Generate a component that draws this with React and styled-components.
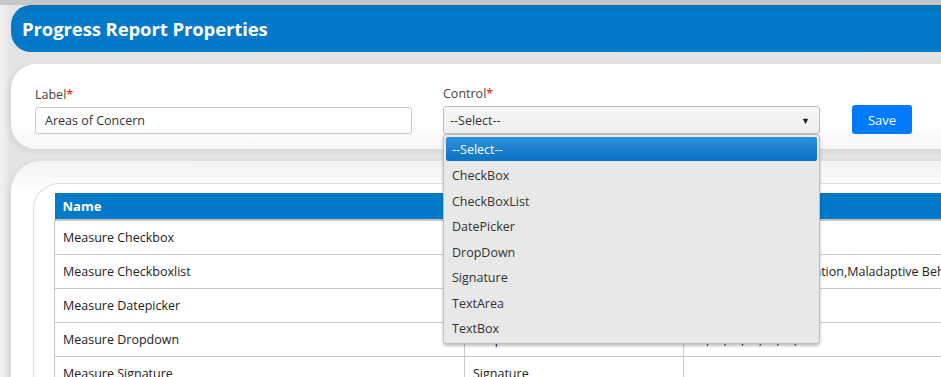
import React from 'react';
import styled, { createGlobalStyle } from 'styled-components';

const GlobalStyle = createGlobalStyle`
    html, body {
        margin: 0;
        padding: 0;
        background: #e3e3e3;
        font-family: 'Open Sans', 'Noto Sans', sans-serif;
        overflow: hidden;
    }
`;

const controls = ['CheckBox', 'CheckBoxList', 'DatePicker', 'DropDown', 'Signature', 'TextArea', 'TextBox'];

const rows = [
    { name: 'Measure Checkbox', control: 'CheckBox', options: '' },
    { name: 'Measure Checkboxlist', control: 'CheckBoxList', options: 'Play Skills,Communication,Maladaptive Behavior' },
    { name: 'Measure Datepicker', control: 'DatePicker', options: '' },
    { name: 'Measure Dropdown', control: 'DropDown', options: '10,20,30,40,50,60,70' },
    { name: 'Measure Signature', control: 'Signature', options: '' },
];

const Page = styled.div`
    width: 941px;
    height: 377px;
    overflow: hidden;
    background: linear-gradient(to right, #f2f2f2 0px, #e4e4e4 10px, #e3e3e3 100%);
    border-top: 5px solid #c6c6c6;
    box-sizing: border-box;
    padding-left: 11px;
    display: flex;
    flex-direction: column;
`;

const Header = styled.div`
    height: 47px;
    background: linear-gradient(to bottom, #0870b8 0px, #0279c9 8px, #0279c9 100%);
    border-radius: 20px 0 0 20px;
    display: flex;
    align-items: center;
    padding-left: 11px;
    flex-shrink: 0;

    h1 {
        margin: 0;
        color: #fff;
        font-size: 18.5px;
        font-weight: 700;
        letter-spacing: -0.1px;
    }
`;

const Card = styled.div`
    width: 1000px;
    background: #fff;
    border-radius: ${(p) => p.radius}px 0 0 ${(p) => p.radius}px;
    box-shadow: -2px 2px 6px rgba(0, 0, 0, 0.08);
    margin-top: ${(p) => p.top}px;
    flex-shrink: 0;
`;

const FormCard = styled(Card)`
    height: 85px;
    box-sizing: border-box;
    padding: 22px 0 0 24px;
    display: flex;
    align-items: flex-end;
    gap: 31px;
    background: linear-gradient(to bottom, #fff 70%, #f6f6f6 100%);
`;

const Field = styled.div`
    display: flex;
    flex-direction: column;
    width: 377px;
    margin-bottom: 15px;
    position: relative;

    label {
        font-size: 12.5px;
        color: #4a3f3f;
        margin-bottom: 4px;
        line-height: 16px;
    }
    label span {
        color: #f00;
    }
`;

const TextInput = styled.div`
    height: 27px;
    border: 1px solid #c8c8c8;
    border-radius: 3px;
    box-sizing: border-box;
    padding: 0 9px;
    display: flex;
    align-items: center;
    font-size: 12.5px;
    color: #333;
`;

const Select = styled(TextInput)`
    height: 28px;
    padding: 0 6px;
    justify-content: space-between;
    background: linear-gradient(to bottom, #f6f6f6, #efefef);
    border-color: #bdbdbd;

    i {
        font-style: normal;
        font-size: 9px;
        color: #222;
        margin-right: 3px;
    }
`;

const SaveButton = styled.button`
    width: 60px;
    height: 29px;
    margin-bottom: 15px;
    margin-left: 1px;
    background: #007bff;
    border: none;
    border-radius: 3px;
    color: #fff;
    font-family: inherit;
    font-size: 13px;
`;

const Menu = styled.ul`
    position: absolute;
    top: 48px;
    left: 0;
    width: 377px;
    height: 210px;
    box-sizing: border-box;
    margin: 0;
    padding: 2px;
    list-style: none;
    background: #e8e8e8;
    border: 1px solid #bfbfbf;
    border-radius: 3px;
    box-shadow: 0 2px 3px rgba(0, 0, 0, 0.25);
    z-index: 10;
`;

const MenuItem = styled.li`
    height: ${(p) => (p.active ? 24 : 25.5)}px;
    display: flex;
    align-items: center;
    padding-left: 6px;
    margin-bottom: ${(p) => (p.active ? 2 : 0)}px;
    font-size: 12.5px;
    color: ${(p) => (p.active ? '#fff' : '#333')};
    background: ${(p) => (p.active ? 'linear-gradient(to bottom, #2d90db, #0a73c5)' : 'transparent')};
    border-radius: 2px;
`;

const GridCard = styled(Card)`
    height: 240px;
    box-sizing: border-box;
    padding: 22px 0 0 22px;
    background: linear-gradient(to bottom, #f3f3f3 0px, #fafafa 20px, #fff 30px);
    border-radius: 30px 0 0 0;
`;

const Panel = styled.div`
    height: 100%;
    background: #fff;
    border: 1px solid #dcdcdc;
    border-right: none;
    border-bottom: none;
    border-radius: 26px 0 0 0;
    padding: 9px 0 0 20px;
`;

const Table = styled.table`
    border-collapse: collapse;
    width: 1000px;
    font-size: 12.5px;
    color: #222;

    th {
        background: #0279c9;
        color: #fff;
        text-align: left;
        font-weight: 700;
        height: 26px;
        padding: 0 8px;
        border-bottom: 2px solid #c6c6c6;
        font-size: 13px;
    }
    td {
        height: 33px;
        padding: 0 8px;
        border: 1px solid #c8c8c8;
        border-top: none;
        white-space: nowrap;
    }
`;

const App = () => {
    return (
        <Page>
            <GlobalStyle />
            <Header>
                <h1>Progress Report Properties</h1>
            </Header>
            <FormCard radius={25} top={12}>
                <Field>
                    <label>
                        Label<span>*</span>
                    </label>
                    <TextInput>Areas of Concern</TextInput>
                </Field>
                <Field>
                    <label>
                        Control<span>*</span>
                    </label>
                    <Select>
                        --Select--
                        <i>▼</i>
                    </Select>
                    <Menu>
                        <MenuItem active>--Select--</MenuItem>
                        {controls.map((c) => (
                            <MenuItem key={c}>{c}</MenuItem>
                        ))}
                    </Menu>
                </Field>
                <SaveButton>Save</SaveButton>
            </FormCard>
            <GridCard radius={30} top={12}>
                <Panel>
                    <Table>
                        <thead>
                            <tr>
                                <th style={{ width: 394 }}>Name</th>
                                <th style={{ width: 203 }}>Control</th>
                                <th>Options</th>
                            </tr>
                        </thead>
                        <tbody>
                            {rows.map((r) => (
                                <tr key={r.name}>
                                    <td>{r.name}</td>
                                    <td>{r.control}</td>
                                    <td>{r.options}</td>
                                </tr>
                            ))}
                        </tbody>
                    </Table>
                </Panel>
            </GridCard>
        </Page>
    );
};

export default App;
